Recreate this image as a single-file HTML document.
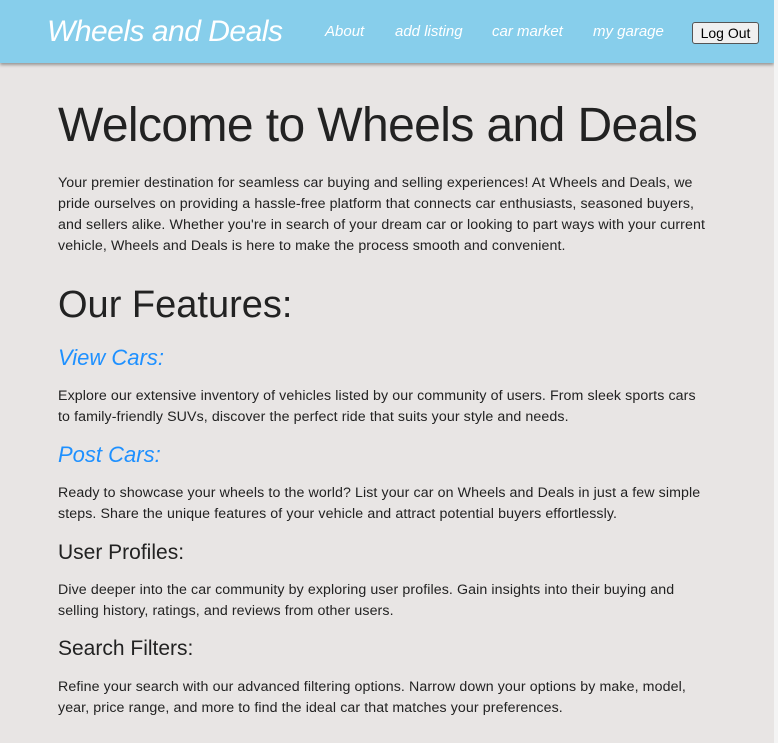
<!DOCTYPE html>
<html><head><meta charset="utf-8"><style>
body{margin:0;width:778px;height:743px;background:#e8e5e4;font-family:"Liberation Sans",sans-serif;color:#222;position:relative;overflow:hidden}
.hdr{position:absolute;left:0;top:0;width:774px;height:63px;background:#87ceeb;box-shadow:0 2px 3px rgba(0,0,0,.35)}
.sb{position:absolute;right:0;top:0;width:4px;height:743px;background:#f4f4f4}
.a{position:absolute;white-space:nowrap}
.logo{left:47px;top:15px;font-size:30px;line-height:34px;color:#fff;font-style:italic;letter-spacing:-0.5px}
.nav{top:22px;font-size:15px;line-height:20px;color:#fff;font-style:italic}
.btn{left:692px;top:22px;width:65px;height:20px;border:1px solid #555;border-radius:3px;background:#f0f0f0;font-size:14px;line-height:20px;text-align:center;color:#000}
.p{left:58px;font-size:14.2px;line-height:21px;letter-spacing:0.1px}
.b{left:58px;font-size:22px;line-height:26px;color:#1e90ff;font-style:italic}
.h3{left:58px;font-size:21px;line-height:24px}
</style></head><body>
<div class="hdr"></div>
<div class="sb"></div>
<div class="a logo">Wheels and Deals</div>
<div class="a nav" style="left:325px">About</div>
<div class="a nav" style="left:395px">add listing</div>
<div class="a nav" style="left:492px">car market</div>
<div class="a nav" style="left:593px">my garage</div>
<div class="a btn">Log Out</div>
<div class="a" style="left:58px;top:102px;font-size:48px;line-height:48px;letter-spacing:-0.6px">Welcome to Wheels and Deals</div>
<div class="a p" style="top:173px">Your premier destination for seamless car buying and selling experiences! At Wheels and Deals, we<br>pride ourselves on providing a hassle-free platform that connects car enthusiasts, seasoned buyers,<br>and sellers alike. Whether you're in search of your dream car or looking to part ways with your current<br>vehicle, Wheels and Deals is here to make the process smooth and convenient.</div>
<div class="a" style="left:58px;top:283px;font-size:38px;line-height:44px">Our Features:</div>
<div class="a b" style="top:345px">View Cars:</div>
<div class="a p" style="top:386px">Explore our extensive inventory of vehicles listed by our community of users. From sleek sports cars<br>to family-friendly SUVs, discover the perfect ride that suits your style and needs.</div>
<div class="a b" style="top:442px">Post Cars:</div>
<div class="a p" style="top:483px">Ready to showcase your wheels to the world? List your car on Wheels and Deals in just a few simple<br>steps. Share the unique features of your vehicle and attract potential buyers effortlessly.</div>
<div class="a h3" style="top:541px">User Profiles:</div>
<div class="a p" style="top:580px">Dive deeper into the car community by exploring user profiles. Gain insights into their buying and<br>selling history, ratings, and reviews from other users.</div>
<div class="a h3" style="top:637px">Search Filters:</div>
<div class="a p" style="top:677px">Refine your search with our advanced filtering options. Narrow down your options by make, model,<br>year, price range, and more to find the ideal car that matches your preferences.</div>
</body></html>
